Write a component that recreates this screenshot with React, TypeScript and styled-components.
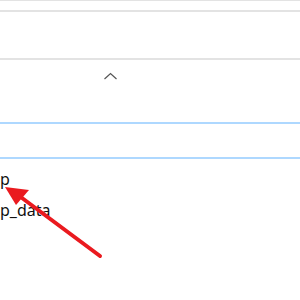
import React from "react";
import styled, { createGlobalStyle } from "styled-components";

const Global = createGlobalStyle`
  html, body { margin: 0; padding: 0; background: #ffffff; }
  body { width: 300px; height: 300px; overflow: hidden; font-family: "Segoe UI", "Noto Sans", "Open Sans", sans-serif; }
`;

const Page = styled.div`
  position: relative;
  width: 300px;
  height: 300px;
  overflow: hidden;
  background: #fff;
`;

const TopStrip = styled.div`
  height: 9px;
  border-top: 1px solid #e3e3e3;
  border-bottom: 2px solid #e3e3e3;
`;

const Ribbon = styled.div`
  height: 46px;
  border-bottom: 2px solid #e3e3e3;
`;

const Header = styled.div`
  height: 62px;
  display: flex;
  justify-content: flex-start;
  padding-left: 103px;
  padding-top: 12px;
  box-sizing: border-box;
`;

const SortChevron = styled.svg`
  width: 15px;
  height: 8px;
  display: block;
`;

const SelectedRow = styled.div`
  height: 33px;
  border-top: 2px solid #aed8ff;
  border-bottom: 2px solid #aed8ff;
`;

const List = styled.div`
  display: flex;
  flex-direction: column;
  padding-top: 9px;
  gap: 9px;
`;

const Item = styled.div`
  height: 22px;
  line-height: 22px;
  font-size: 16px;
  color: #111;
  margin-left: 0;
  white-space: nowrap;
`;

const Arrow = styled.svg`
  position: absolute;
  left: 0;
  top: 0;
  width: 300px;
  height: 300px;
  pointer-events: none;
`;

export default function App() {
  return (
    <Page>
      <Global />
      <TopStrip />
      <Ribbon />
      <Header>
        <SortChevron viewBox="0 0 15 8">
          <polyline points="1.5,7 7.5,1.5 13.5,7" fill="none" stroke="#555" strokeWidth="1.2" />
        </SortChevron>
      </Header>
      <SelectedRow />
      <List>
        <Item>p</Item>
        <Item>p_data</Item>
      </List>
      <Arrow viewBox="0 0 300 300">
        <line x1="100" y1="256" x2="18" y2="195" stroke="#ea1a1f" strokeWidth="4" strokeLinecap="round" />
        <polygon points="5,187 29,190 16,205" fill="#ea1a1f" />
      </Arrow>
    </Page>
  );
}
